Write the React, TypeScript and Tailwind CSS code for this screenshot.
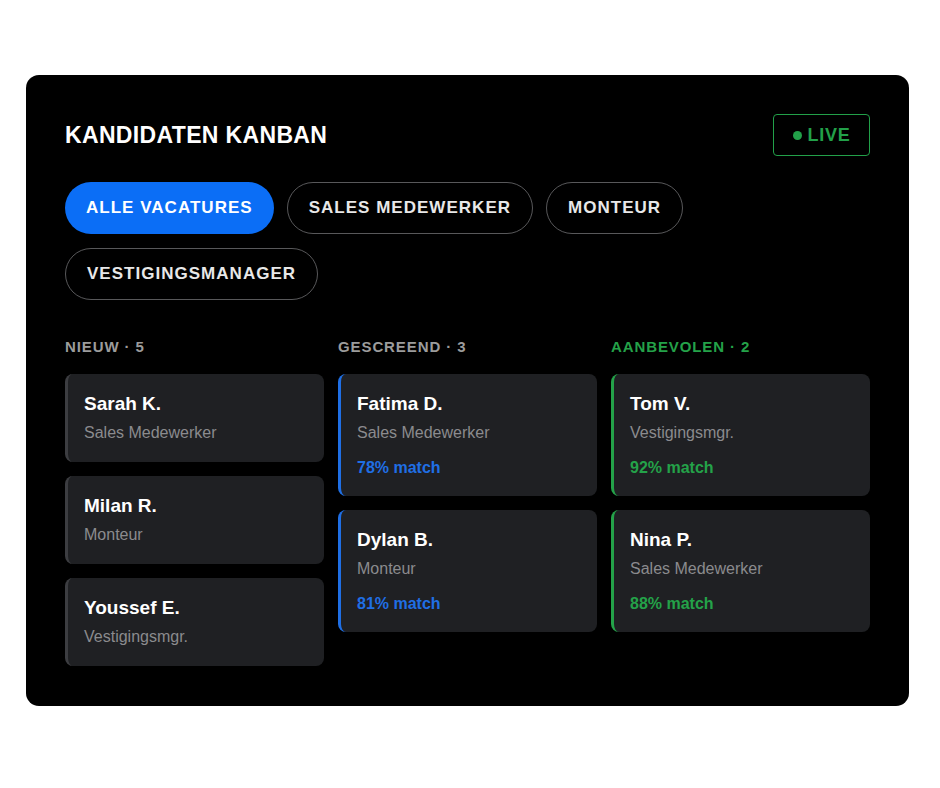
import React from 'react';

type Candidate = {
  name: string;
  role: string;
  match?: string;
};

type Column = {
  title: string;
  count: number;
  tone: 'gray' | 'blue' | 'green';
  items: Candidate[];
};

const columns: Column[] = [
  {
    title: 'NIEUW',
    count: 5,
    tone: 'gray',
    items: [
      { name: 'Sarah K.', role: 'Sales Medewerker' },
      { name: 'Milan R.', role: 'Monteur' },
      { name: 'Youssef E.', role: 'Vestigingsmgr.' },
    ],
  },
  {
    title: 'GESCREEND',
    count: 3,
    tone: 'blue',
    items: [
      { name: 'Fatima D.', role: 'Sales Medewerker', match: '78% match' },
      { name: 'Dylan B.', role: 'Monteur', match: '81% match' },
    ],
  },
  {
    title: 'AANBEVOLEN',
    count: 2,
    tone: 'green',
    items: [
      { name: 'Tom V.', role: 'Vestigingsmgr.', match: '92% match' },
      { name: 'Nina P.', role: 'Sales Medewerker', match: '88% match' },
    ],
  },
];

const tabs = ['ALLE VACATURES', 'SALES MEDEWERKER', 'MONTEUR', 'VESTIGINGSMANAGER'];

const borderTone = {
  gray: 'border-[#3c3d41]',
  blue: 'border-[#1f6fe5]',
  green: 'border-[#24a249]',
};

const textTone = {
  gray: 'text-[#9c9c9c]',
  blue: 'text-[#1f6fe5]',
  green: 'text-[#24a249]',
};

const CandidateCard: React.FC<{ c: Candidate; tone: Column['tone'] }> = ({ c, tone }) => (
  <div
    className={`rounded-[8px] border-l-[3px] ${borderTone[tone]} bg-[#1f2023] pl-[16px] pr-4 pt-[18px] ${
      c.match ? 'pb-[18px]' : 'pb-[19px]'
    }`}
  >
    <div className="text-[19px] leading-[23px] font-bold text-white">{c.name}</div>
    <div className="mt-[8px] text-[16px] leading-[20px] text-[#8b8b8e]">{c.role}</div>
    {c.match && (
      <div className={`mt-[15px] text-[16px] leading-[20px] font-bold ${textTone[tone]}`}>{c.match}</div>
    )}
  </div>
);

const App: React.FC = () => {
  return (
    <div className="min-h-screen bg-white pt-[75px] pl-[26px]" style={{ fontFamily: '"Liberation Sans", Arial, sans-serif' }}>
      <div className="w-[883px] rounded-[13px] bg-black px-[39px] pt-[39px] pb-[40px]">
        {/* header */}
        <div className="flex items-center justify-between">
          <h1 className="text-[23px] font-bold tracking-[0.015em] text-white">KANDIDATEN KANBAN</h1>
          <div className="flex h-[42px] w-[97px] items-center justify-center gap-[6px] rounded-[4px] border-[1.5px] border-[#22a049] text-[18px] font-bold tracking-[0.04em] text-[#22a049]">
            <span className="h-[9px] w-[9px] rounded-full bg-[#22a049]" />
            LIVE
          </div>
        </div>

        {/* filters */}
        <div className="mt-[26px] flex flex-wrap gap-x-[13px] gap-y-[14px]">
          {tabs.map((t, i) => (
            <button
              key={t}
              className={
                i === 0
                  ? 'h-[52px] rounded-full bg-[#0b6ef6] px-[21px] text-[17px] font-bold tracking-[0.06em] text-white'
                  : 'h-[52px] rounded-full border-[1.5px] border-[#58585a] px-[21px] text-[17px] font-bold tracking-[0.06em] text-[#e8e8e8]'
              }
            >
              {t}
            </button>
          ))}
        </div>

        {/* board */}
        <div className="mt-[37px] grid grid-cols-3 gap-[14px]">
          {columns.map(col => (
            <div key={col.title}>
              <div className={`text-[15px] leading-[20px] font-bold tracking-[0.06em] ${col.tone === 'green' ? 'text-[#24a249]' : 'text-[#9c9c9c]'}`}>
                {col.title} · {col.count}
              </div>
              <div className="mt-[17px] flex flex-col gap-[14px]">
                {col.items.map(c => (
                  <CandidateCard key={c.name} c={c} tone={col.tone} />
                ))}
              </div>
            </div>
          ))}
        </div>
      </div>
    </div>
  );
};

export default App;
